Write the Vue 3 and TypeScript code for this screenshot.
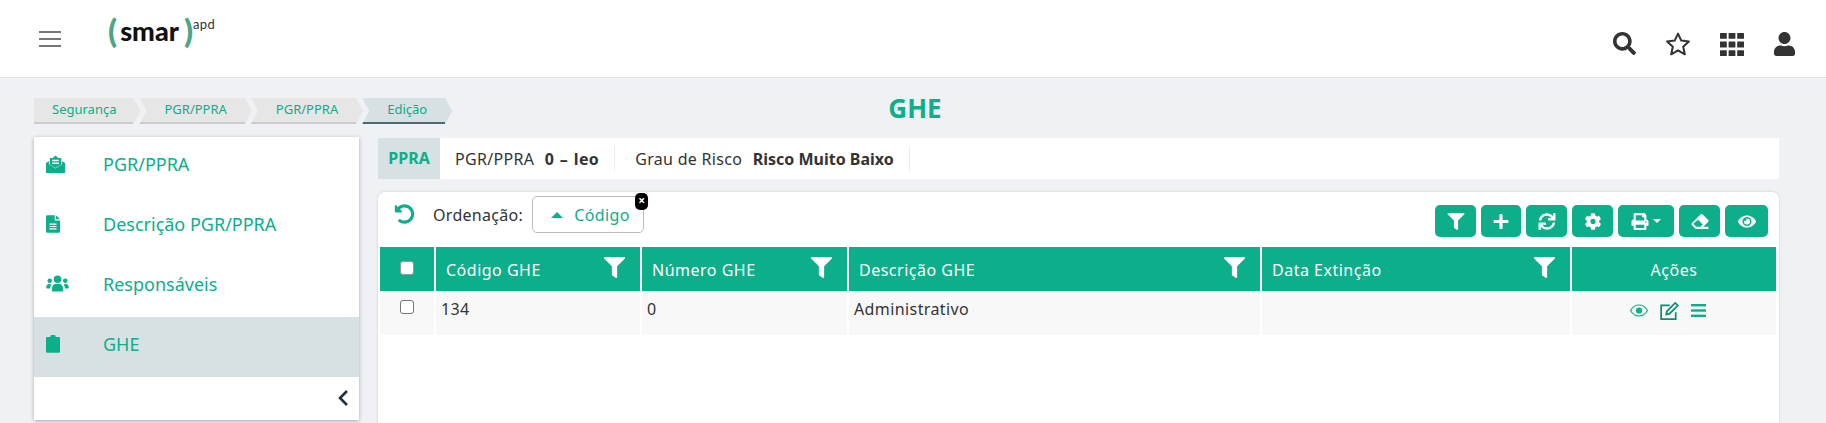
<template>
  <div class="page">
    <header class="topbar">
      <button class="menu-btn" aria-label="Menu"><span /><span /><span /></button>
      <div class="logo">
        <span class="paren">(</span><span class="smar">smar</span><span class="paren">)</span><sup class="apd">apd</sup>
      </div>
      <div class="top-icons">
        <svg class="top-icon search" viewBox="0 0 512 512"><path :d="ICONS.search.d" /></svg>
        <svg class="top-icon" viewBox="1.4 1.6 21.2 20.4"><path class="star" d="M12 2.600l2.900 6.200 6.700.8-5 4.600 1.400 6.700-6-3.400-6 3.400 1.400-6.700-5-4.600 6.700-.8z" /></svg>
        <svg class="top-icon" viewBox="0 0 24 24">
          <rect v-for="cell in APPS" :key="cell[0] + '-' + cell[1]" :x="cell[0]" :y="cell[1]" width="6.800" height="5.800" rx=".5" />
        </svg>
        <svg class="top-icon user" viewBox="0 0 448 512"><path :d="ICONS.user.d" /></svg>
      </div>
    </header>

    <div class="title-row">
      <nav class="crumbs">
        <a v-for="(c, i) in CRUMBS" :key="i" class="crumb" :class="{ first: i === 0, current: i === CRUMBS.length - 1 }">{{ c }}</a>
      </nav>
      <h1 class="title">GHE</h1>
    </div>

    <div class="main">
      <aside class="side">
        <a v-for="item in MENU" :key="item.label" class="side-item" :class="{ active: item.active }">
          <span class="side-icon-wrap">
            <svg class="side-icon" :viewBox="item.box" :style="{ width: item.w + 'px', height: item.h + 'px' }" v-html="item.svg" />
          </span>
          <span>{{ item.label }}</span>
        </a>
        <div class="side-foot">
          <svg class="chev" viewBox="0 0 12 18"><path d="M10 2L3 9l7 7" /></svg>
        </div>
      </aside>

      <section class="content">
        <div class="info">
          <div class="info-tag">PPRA</div>
          <div class="info-cell first">PGR/PPRA <b>0 – leo</b></div>
          <div class="info-cell">Grau de Risco <b>Risco Muito Baixo</b></div>
        </div>

        <div class="card">
          <div class="toolbar">
            <svg class="undo" viewBox="0 0 512 512"><path :d="ICONS.undo.d" /></svg>
            <span class="order-label">Ordenação:</span>
            <div class="chip">
              <i class="caret" />
              <span>Código</span>
              <span class="chip-x">×</span>
            </div>
            <div class="actions">
              <button v-for="b in BUTTONS" :key="b.name" class="act" :style="{ width: b.w + 'px' }">
                <svg class="act-icon" :viewBox="ICONS[b.name].box"><path :d="ICONS[b.name].d" /></svg>
                <i v-if="b.name === 'print'" class="act-caret" />
              </button>
            </div>
          </div>

          <div class="table">
            <div class="th check"><i class="box head" /></div>
            <div v-for="col in COLUMNS" :key="col" class="th">
              <span>{{ col }}</span>
              <svg class="th-filter" viewBox="0 0 512 512"><path :d="ICONS.filter.d" /></svg>
            </div>
            <div class="th center">Ações</div>

            <div class="td check"><i class="box" /></div>
            <div v-for="(v, i) in ROW" :key="i" class="td">{{ v }}</div>
            <div class="td row-acts">
              <svg class="eye" viewBox="10 10 556 380"><path d="M288 30C178 30 82 100 28 200c54 100 150 170 260 170s206-70 260-170C494 100 398 30 288 30z" class="eye-o" /><circle cx="288" cy="200" r="95" /></svg>
              <svg class="edit" viewBox="2 1 21.500 21"><path d="M20 13v8H3V5h10" /><path d="M9 15.500l.6-3.600L19.400 2.100l3 3-9.800 9.800z" /></svg>
              <svg class="bars" viewBox="0 0 15 13"><rect y="0" width="15" height="2.400" /><rect y="5.300" width="15" height="2.400" /><rect y="10.600" width="15" height="2.400" /></svg>
            </div>
          </div>
        </div>
      </section>
    </div>
  </div>
</template>

<script setup lang="ts">
type Icon = { box: string; d: string }

const ICONS: Record<string, Icon> = {
  filter: { box: '0 0 512 512', d: 'M487.976 0H24.028C2.71 0-8.047 25.866 7.058 40.971L192 225.941V432c0 7.831 3.821 15.17 10.237 19.662l80 55.98C298.02 518.69 320 507.493 320 487.98V225.941l184.947-184.97C520.021 25.896 509.338 0 487.976 0z' },
  search: { box: '0 0 512 512', d: 'M505 442.7L405.3 343c-4.5-4.5-10.6-7-17-7H372c27.6-35.3 44-79.7 44-128C416 93.1 322.9 0 208 0S0 93.1 0 208s93.1 208 208 208c48.3 0 92.7-16.4 128-44v16.3c0 6.4 2.5 12.5 7 17l99.7 99.7c9.4 9.4 24.6 9.4 33.9 0l28.3-28.3c9.4-9.4 9.4-24.6.1-34zM208 336c-70.7 0-128-57.2-128-128 0-70.7 57.2-128 128-128 70.7 0 128 57.2 128 128 0 70.7-57.2 128-128 128z' },
  user: { box: '0 0 448 512', d: 'M224 256c70.7 0 128-57.3 128-128S294.7 0 224 0 96 57.3 96 128s57.3 128 128 128zm89.6 32h-16.7c-22.2 10.2-46.9 16-72.9 16s-50.6-5.8-72.9-16h-16.7C60.2 288 0 348.2 0 422.4V464c0 26.5 21.5 48 48 48h352c26.5 0 48-21.5 48-48v-41.6c0-74.2-60.2-134.4-134.4-134.4z' },
  undo: { box: '0 0 512 512', d: 'M255.545 8c-66.269.119-126.438 26.233-170.86 68.685L48.971 40.971C33.851 25.851 8 36.559 8 57.941V192c0 13.255 10.745 24 24 24h134.059c21.382 0 32.09-25.851 16.971-40.971l-41.75-41.75c30.864-28.899 70.801-44.907 113.23-45.273 92.398-.798 170.283 73.977 169.484 169.442C423.236 348.009 349.816 424 256 424c-41.127 0-79.997-14.678-110.63-41.556-4.743-4.161-11.906-3.908-16.368.553L89.34 422.659c-4.872 4.872-4.631 12.815.482 17.433C133.798 479.813 192.074 504 256 504c136.966 0 247.999-111.033 248-247.998C504.001 119.193 392.354 7.755 255.545 8z' },
  plus: { box: '0 0 448 512', d: 'M416 208H272V64c0-17.67-14.33-32-32-32h-32c-17.67 0-32 14.33-32 32v144H32c-17.67 0-32 14.33-32 32v32c0 17.67 14.33 32 32 32h144v144c0 17.67 14.33 32 32 32h32c17.67 0 32-14.33 32-32V304h144c17.67 0 32-14.33 32-32v-32c0-17.67-14.33-32-32-32z' },
  sync: { box: '0 0 512 512', d: 'M440.65 12.57l4 82.77A247.16 247.16 0 0 0 255.83 8C134.73 8 33.91 94.92 12.29 209.82A12 12 0 0 0 24.09 224h49.05a12 12 0 0 0 11.67-9.26 175.91 175.91 0 0 1 317-56.94l-101.46-4.86a12 12 0 0 0-12.57 12v47.41a12 12 0 0 0 12 12H500a12 12 0 0 0 12-12V12a12 12 0 0 0-12-12h-47.37a12 12 0 0 0-11.98 12.57zM255.83 432a175.61 175.61 0 0 1-146-77.8l101.8 4.87a12 12 0 0 0 12.57-12v-47.4a12 12 0 0 0-12-12H12a12 12 0 0 0-12 12V500a12 12 0 0 0 12 12h47.35a12 12 0 0 0 12-12.6l-4.15-82.57A247.17 247.17 0 0 0 255.83 504c121.11 0 221.93-86.92 243.55-201.82a12 12 0 0 0-11.8-14.18h-49.05a12 12 0 0 0-11.67 9.26A175.86 175.86 0 0 1 255.83 432z' },
  cog: { box: '0 0 512 512', d: 'M487.4 315.7l-42.6-24.6c4.3-23.2 4.3-47 0-70.2l42.6-24.6c4.9-2.8 7.1-8.6 5.5-14-11.1-35.6-30-67.8-54.7-94.6-3.8-4.1-10-5.1-14.8-2.3L380.8 110c-17.9-15.4-38.5-27.3-60.8-35.1V25.8c0-5.6-3.9-10.5-9.4-11.7-36.7-8.2-74.3-7.8-109.2 0-5.5 1.2-9.4 6.1-9.4 11.7V75c-22.2 7.9-42.8 19.8-60.8 35.1L88.7 85.5c-4.9-2.8-11-1.9-14.8 2.3-24.7 26.7-43.6 58.9-54.7 94.6-1.7 5.4.6 11.2 5.5 14L67.3 221c-4.3 23.2-4.3 47 0 70.2l-42.6 24.6c-4.9 2.8-7.1 8.6-5.5 14 11.1 35.6 30 67.8 54.7 94.6 3.8 4.1 10 5.1 14.8 2.3l42.6-24.6c17.9 15.4 38.5 27.3 60.8 35.1v49.2c0 5.6 3.9 10.5 9.4 11.7 36.7 8.2 74.3 7.8 109.2 0 5.5-1.2 9.4-6.1 9.4-11.7v-49.2c22.2-7.9 42.8-19.8 60.8-35.1l42.6 24.6c4.9 2.8 11 1.9 14.8-2.3 24.7-26.7 43.6-58.9 54.7-94.6 1.5-5.5-.7-11.3-5.6-14.1zM256 336c-44.1 0-80-35.9-80-80s35.9-80 80-80 80 35.9 80 80-35.9 80-80 80z' },
  print: { box: '0 0 512 512', d: 'M448 192V77.25c0-8.49-3.37-16.62-9.37-22.63L393.37 9.37c-6-6-14.14-9.37-22.63-9.37H96C78.33 0 64 14.33 64 32v160c-35.35 0-64 28.65-64 64v112c0 8.84 7.16 16 16 16h48v96c0 17.67 14.33 32 32 32h320c17.67 0 32-14.33 32-32v-96h48c8.84 0 16-7.16 16-16V256c0-35.35-28.65-64-64-64zm-64 256H128v-96h256v96zm0-224H128V64h192v48c0 8.84 7.16 16 16 16h48v96zm48 72c-13.25 0-24-10.75-24-24s10.75-24 24-24 24 10.75 24 24-10.75 24-24 24z' },
  eraser: { box: '0 0 512 512', d: 'M497.94 273.94a48 48 0 0 0 0-67.88l-160-160a48 48 0 0 0-67.88 0l-256 256a48 48 0 0 0 0 67.88l96 96A48 48 0 0 0 144 480h356a12 12 0 0 0 12-12v-40a12 12 0 0 0-12-12H355.88zM198.63 206.63l137.37 137.37L271.37 416H144L54 326z' },
  eye: { box: '0 0 576 512', d: 'M572.52 241.4C518.29 135.59 410.93 64 288 64S57.68 135.64 3.48 241.41a32.35 32.35 0 0 0 0 29.19C57.71 376.41 165.07 448 288 448s230.32-71.64 284.52-177.41a32.35 32.35 0 0 0 0-29.19zM288 400a144 144 0 1 1 144-144 143.93 143.93 0 0 1-144 144zm0-240a95.31 95.31 0 0 0-25.31 3.79 47.85 47.85 0 0 1-66.9 66.9A95.78 95.78 0 1 0 288 160z' },
}

const APPS = [0, 8.6, 17.2].flatMap((y) => [0, 8.6, 17.2].map((x) => [x, y + 1]))

const CRUMBS = ['Segurança', 'PGR/PPRA', 'PGR/PPRA', 'Edição']

const MENU = [
  {
    label: 'PGR/PPRA',
    w: 19,
    h: 18,
    box: '0 0 20 19',
    svg: '<path d="M0 8.500l3-2.200v3.400l7 4.600 7-4.600V6.300l3 2.200V19H0zM4 10V3.200h3L10 .4l3 2.800h3V10l-6 3.800z"/><path fill="#fff" d="M6.500 5h7v1.500h-7zM6.500 8h7v1.500h-7z"/>',
  },
  {
    label: 'Descrição PGR/PPRA',
    w: 14,
    h: 18,
    box: '0 0 16 20',
    svg: '<path d="M0 1.500A1.500 1.500 0 0 1 1.500 0H10v6h6v12.500a1.500 1.500 0 0 1-1.500 1.500h-13A1.500 1.500 0 0 1 0 18.500zM11.300 0L16 4.700h-4.700z"/><path fill="#fff" d="M4 9.500h8v1.300H4zM4 12.200h8v1.300H4zM4 14.900h8v1.300H4z"/>',
  },
  {
    label: 'Responsáveis',
    w: 23,
    h: 17,
    box: '0 0 24 18',
    svg: '<circle cx="12" cy="4.600" r="4"/><circle cx="3.800" cy="6" r="2.400"/><circle cx="20.200" cy="6" r="2.400"/><path d="M6.200 17.400v-3.200c0-3 2.200-4.600 4-4.600h3.600c1.800 0 4 1.600 4 4.600v3.200zM0 13.500c0-2.500 1.300-4 3.200-4 1 0 1.800.3 2.400.9-1 1-1.500 2.400-1.500 3.900H.8zM24 13.500c0-2.500-1.300-4-3.200-4-1 0-1.800.3-2.400.9 1 1 1.500 2.400 1.500 3.900h3.300z"/>',
  },
  {
    label: 'GHE',
    active: true,
    w: 14,
    h: 18,
    box: '0 0 16 20',
    svg: '<path d="M1.500 2H5a3 3 0 0 1 6 0h3.500A1.500 1.500 0 0 1 16 3.500v15a1.500 1.500 0 0 1-1.500 1.500h-13A1.500 1.500 0 0 1 0 18.500v-15A1.500 1.500 0 0 1 1.500 2z"/>',
  },
]

const BUTTONS = [
  { name: 'filter', w: 41 },
  { name: 'plus', w: 40 },
  { name: 'sync', w: 41 },
  { name: 'cog', w: 41 },
  { name: 'print', w: 56 },
  { name: 'eraser', w: 41 },
  { name: 'eye', w: 43 },
]

const COLUMNS = ['Código GHE', 'Número GHE', 'Descrição GHE', 'Data Extinção']
const ROW = ['134', '0', 'Administrativo', '']
</script>

<style>
html, body { margin: 0; overflow: hidden; background: #eff1f5; }
</style>

<style scoped>
.page {
  width: 1826px;
  height: 423px;
  overflow: hidden;
  background: #eff1f5;
  color: #333;
  font-family: "Noto Sans", sans-serif;
  font-size: 16px;
  letter-spacing: .4px;
}

/* top bar */
.topbar {
  height: 77px;
  background: #fff;
  border-bottom: 1px solid #e4e5e8;
  display: flex;
  align-items: flex-start;
  padding-left: 39px;
  padding-right: 31px;
}
.menu-btn {
  width: 22px;
  height: 16px;
  margin-top: 31px;
  padding: 0;
  border: 0;
  background: none;
  display: flex;
  flex-direction: column;
  justify-content: space-between;
}
.menu-btn span { display: block; height: 2px; background: #777; }
.logo {
  margin-left: 47px;
  margin-top: 12px;
  font-family: Lato, sans-serif;
  letter-spacing: 0;
  display: flex;
  align-items: flex-start;
  line-height: 40px;
  color: #111;
}
.smar { font-size: 27px; font-weight: 900; margin: 0 5px 0 3px; line-height: 38px; }
.paren { font-size: 33px; line-height: 36px; color: #4ea585; font-weight: 900; }
.apd { font-size: 13px; line-height: 14px; margin-top: 5px; font-weight: 400; color: #333; margin-left: 0; letter-spacing: .3px; }
.top-icons {
  margin-left: auto;
  margin-top: 32px;
  display: flex;
  gap: 30px;
}
.top-icon { width: 24px; height: 24px; fill: #333; display: block; }
.top-icon.search { width: 23px; height: 23px; }
.top-icon.user { width: 21px; }
.star { fill: none; stroke: #333; stroke-width: 1.800; stroke-linejoin: round; }

/* breadcrumb + title */
.title-row {
  display: grid;
  grid-template-columns: 1fr auto 1fr;
  align-items: start;
  padding-top: 20px;
  height: 59px;
  box-sizing: border-box;
}
.crumbs { display: flex; padding-left: 34px; }
.crumb {
  position: relative;
  height: 26px;
  line-height: 23px;
  padding: 0 25px 0 25px;
  margin-right: -1px;
  background: #e6e6e6;
  color: #0dae8a;
  font-size: 13px;
  letter-spacing: 0;
  clip-path: polygon(0 0, calc(100% - 7px) 0, 100% 50%, calc(100% - 7px) 100%, 0 100%, 7px 50%);
}
.crumb.first {
  padding-left: 18px;
  padding-right: 24px;
  clip-path: polygon(0 0, calc(100% - 7px) 0, 100% 50%, calc(100% - 7px) 100%, 0 100%);
}
.crumb::after {
  content: "";
  position: absolute;
  left: 0;
  right: 7px;
  bottom: 0;
  height: 2px;
  background: #ccc;
}
.crumb.current { background: #d7e0e2; }
.crumb.current::after { background: #4b6b70; }
.title {
  margin: -7px 0 0;
  padding-left: 4px;
  color: #0dae8a;
  font-size: 26px;
  font-weight: 700;
  line-height: 34px;
  letter-spacing: 0;
}

/* sidebar */
.main { display: flex; padding-left: 34px; align-items: flex-start; }
.side {
  width: 325px;
  height: 283px;
  background: #fff;
  box-shadow: 0 1px 4px rgba(0, 0, 0, .3);
  flex: none;
}
.side-item {
  height: 60px;
  box-sizing: border-box;
  padding: 0 0 7px 12px;
  display: flex;
  align-items: center;
  color: #0dae8a;
  font-size: 18px;
  letter-spacing: 0;
}
.side-item.active { background: #d7e0e2; }
.side-icon-wrap { width: 57px; display: flex; flex: none; }
.side-icon { fill: #0dae8a; display: block; }
.side-foot { display: flex; justify-content: flex-end; padding: 12px 10px 0 0; }
.chev { width: 12px; height: 18px; fill: none; stroke: #22303a; stroke-width: 2.600; }

/* content */
.content { width: 1401px; margin-left: 19px; margin-top: 1px; }
.info { display: flex; height: 41px; background: #fff; align-items: center; }
.info-tag {
  width: 62px;
  height: 41px;
  line-height: 41px;
  text-align: center;
  background: #d7e0e2;
  color: #0dae8a;
  font-weight: 700;
  font-size: 16px;
  letter-spacing: 0;
}
.info-cell {
  height: 26px;
  line-height: 26px;
  padding: 0 15px 0 20px;
  border-right: 1px solid #eee;
  letter-spacing: .3px;
}
.info-cell.first { padding-left: 15px; }
.info-cell b { font-weight: 700; margin-left: 6px; letter-spacing: 0; }
.info-cell.first b { letter-spacing: .4px; word-spacing: 1px; }

.card {
  margin-top: 13px;
  height: 240px;
  background: #fff;
  border-radius: 7px 7px 0 0;
  box-shadow: 0 0 3px rgba(0, 0, 0, .15);
  padding: 4px 3px 0 2px;
  box-sizing: border-box;
}
.toolbar { display: flex; align-items: flex-start; height: 51px; }
.undo { width: 21px; height: 20px; margin: 8px 0 0 14px; fill: #0dae8a; flex: none; }
.order-label { margin: 9px 0 0 18px; line-height: 20px; letter-spacing: .3px; }
.chip {
  position: relative;
  width: 112px;
  height: 37px;
  margin: 0 0 0 9px;
  box-sizing: border-box;
  border: 1px solid #bbb;
  border-radius: 5px;
  display: flex;
  align-items: center;
  padding-left: 18px;
  color: #0dae8a;
}
.caret {
  width: 0;
  height: 0;
  border: 6px solid transparent;
  border-top: 0;
  border-bottom: 6px solid #0dae8a;
  margin-right: 11px;
}
.chip-x {
  position: absolute;
  right: -5px;
  top: -4px;
  width: 13px;
  height: 17px;
  background: #000;
  color: #fff;
  border-radius: 5px;
  font-size: 12px;
  line-height: 16px;
  text-align: center;
  font-weight: 700;
  letter-spacing: 0;
}
.actions { margin-left: auto; margin-top: 9px; margin-right: 8px; display: flex; gap: 5px; }
.act {
  height: 32px;
  border: 0;
  padding: 0;
  border-radius: 5px;
  background: #0dae8a;
  display: flex;
  align-items: center;
  justify-content: center;
  gap: 4px;
}
.act-icon { height: 17px; width: 18px; fill: #fff; }
.act-caret {
  width: 0;
  height: 0;
  border: 4px solid transparent;
  border-bottom: 0;
  border-top: 4px solid #fff;
}

.table {
  display: grid;
  grid-template-columns: 54px 204px 205px 411px 308px 204px;
  grid-template-rows: 44px 44px;
  column-gap: 2px;
}
.th {
  background: #0dae8a;
  color: #fff;
  display: flex;
  align-items: center;
  justify-content: space-between;
  padding: 1px 15px 0 10px;
  letter-spacing: .5px;
}
.th.center { justify-content: center; padding: 1px 0 0; }
.th.check, .td.check { padding: 0; justify-content: center; display: flex; align-items: flex-start; }
.th-filter { width: 21px; height: 21px; fill: #fff; margin-top: -5px; }
.td {
  background: #f8f8f8;
  padding: 0 5px;
  line-height: 36px;
}
.box {
  display: block;
  width: 14px;
  height: 14px;
  margin-top: 9px;
  box-sizing: border-box;
  border: 1px solid #777;
  border-radius: 3px;
  background: #fff;
}
.box.head { margin-top: 14px; border-color: #999; }
.row-acts { display: flex; justify-content: center; gap: 12px; align-items: flex-start; padding: 11px 12px 0 0; }
.eye { width: 18px; height: 13px; margin-top: 2px; }
.eye-o { fill: none; stroke: #0dae8a; stroke-width: 36; }
.eye circle { fill: #0dae8a; }
.edit { width: 19px; height: 18px; fill: none; stroke: #0a8d72; stroke-width: 2; }
.bars { width: 15px; height: 13px; fill: #0dae8a; margin-top: 2px; }
</style>
